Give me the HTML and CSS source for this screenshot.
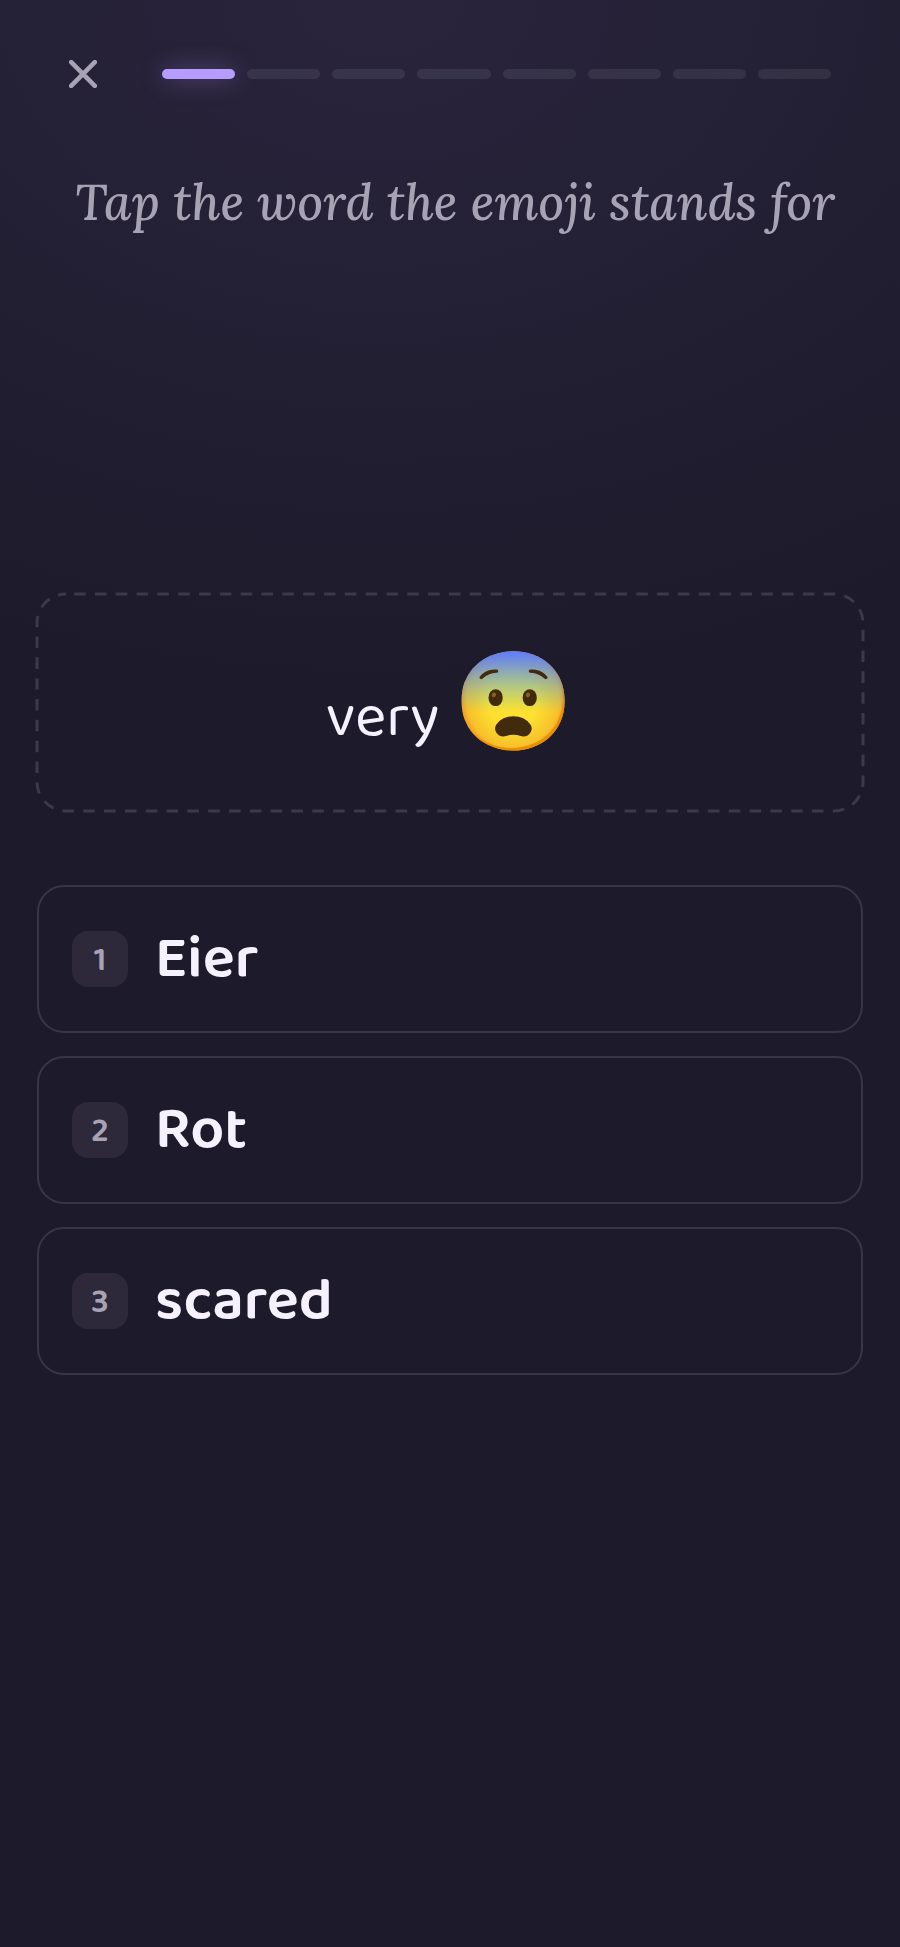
FILE: index.html
```html
<!DOCTYPE html>
<html lang="en">
<head>
    <meta charset="UTF-8">
    <meta name="viewport" content="width=device-width, initial-scale=1.0">
    <title>Emoji quiz</title>
    <link rel="stylesheet" href="styles.css">
</head>
<body>
    <header class="top-bar">
        <button class="close-btn" type="button" aria-label="Close">
            <svg viewBox="0 0 28 28" aria-hidden="true">
                <path d="M2.2 2.2 25.8 25.8M25.8 2.2 2.2 25.8"/>
            </svg>
        </button>
        <div class="progress" role="progressbar" aria-label="Progress" aria-valuemin="0" aria-valuemax="8" aria-valuenow="1">
            <span class="step active"></span>
            <span class="step"></span>
            <span class="step"></span>
            <span class="step"></span>
            <span class="step"></span>
            <span class="step"></span>
            <span class="step"></span>
            <span class="step"></span>
        </div>
    </header>

    <main>
        <h1>Tap the word the emoji stands for</h1>

        <div class="prompt">
            <!-- dashed outline -->
            <svg class="outline" aria-hidden="true">
                <rect width="100%" height="100%" rx="29" pathLength="1760"/>
            </svg>
            <span>very</span>
            <span class="emoji">😨</span>
        </div>

        <div class="options">
            <button class="option" type="button"><span class="key">1</span>Eier</button>
            <button class="option" type="button"><span class="key">2</span>Rot</button>
            <button class="option" type="button"><span class="key">3</span>scared</button>
        </div>
    </main>
</body>
</html>
```
FILE: styles.css
```css
* {
    box-sizing: border-box;
}

body {
    min-height: 100vh;
    margin: 0;
    background: radial-gradient(ellipse 110% 700px at 42% 0, #29243c, #1d1a2b) no-repeat #1d1a2b;
    color: #f6f1ff;
    font-family: "Baloo 2", "Noto Sans", sans-serif;
}

.top-bar {
    display: flex;
    align-items: center;
    gap: 65px;
    padding: 60px 69px 0;
}

.close-btn {
    width: 28px;
    height: 28px;
    padding: 0;
    border: 0;
    background: none;
    cursor: pointer;
}

.close-btn svg {
    display: block;
    fill: none;
    stroke: #a8a2b5;
    stroke-width: 4.6;
    stroke-linecap: round;
}

.progress {
    flex: 1;
    display: flex;
    gap: 12px;
}

.step {
    flex: 1;
    height: 10px;
    border-radius: 5px;
    background: rgba(255, 255, 255, 0.08);
}

.step.active {
    background: #b79cff;
    box-shadow: 0 0 24px rgba(183, 156, 255, 0.4);
}

main {
    padding: 0 37px 40px;
}

h1 {
    margin: 79px 0 0;
    padding-left: 10px;
    color: #a8a2b5;
    font-family: Lora, "Liberation Serif", serif;
    font-size: 50px;
    font-style: italic;
    font-weight: 500;
    line-height: 70px;
    text-align: center;
}

.prompt {
    position: relative;
    display: flex;
    align-items: baseline;
    justify-content: center;
    gap: 14px;
    height: 217px;
    margin-top: 357px;
    padding-top: 70px;
    font-size: 60px;
    line-height: 76px;
}

.outline {
    position: absolute;
    top: 0;
    left: 0;
    width: 100%;
    height: 100%;
    overflow: visible;
    fill: none;
    stroke: #3d384a;
    stroke-width: 3;
    stroke-dasharray: 10 8;
    stroke-dashoffset: -7;
}

.emoji {
    font-family: "Noto Color Emoji", sans-serif;
    font-size: 97px;
}

.options {
    display: flex;
    flex-direction: column;
    gap: 23px;
    margin-top: 74px;
}

.option {
    display: flex;
    align-items: center;
    gap: 27px;
    height: 148px;
    padding: 0 33px;
    border: 2px solid #3a3547;
    border-radius: 27px;
    background: none;
    color: inherit;
    font-family: inherit;
    font-size: 60px;
    font-weight: 600;
    text-align: left;
    cursor: pointer;
}

.key {
    width: 56px;
    height: 56px;
    border-radius: 16px;
    background: #2d293a;
    color: #a8a2b5;
    font-size: 34px;
    line-height: 60px;
    text-align: center;
}
```
